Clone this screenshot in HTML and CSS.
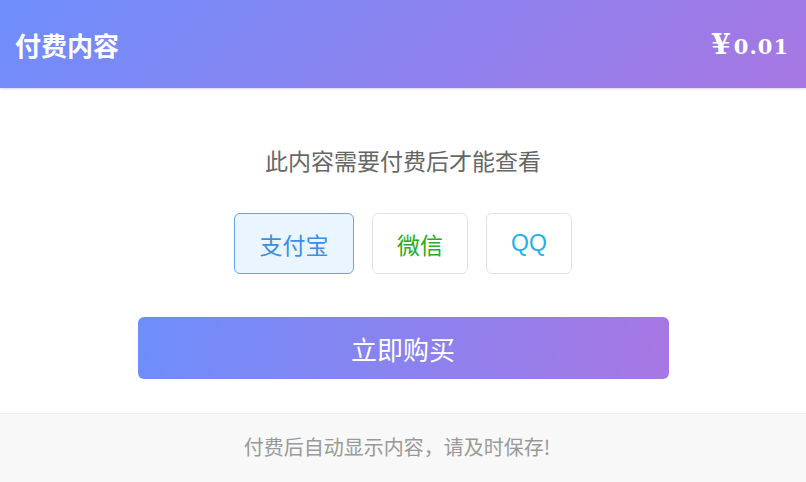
FILE: index.html
```html
<!DOCTYPE html>
<html lang="zh-CN">
<head>
<meta charset="utf-8">
<title>付费内容</title>
<link rel="stylesheet" href="styles.css">
</head>
<body>
<div class="card">
  <header class="head">
    <div class="title">付费内容</div>
    <div class="price"><span class="yen">¥</span><span class="num">0.01</span></div>
  </header>
  <main class="content">
    <p class="tip">此内容需要付费后才能查看</p>
    <div class="methods">
      <button class="method alipay">支付宝</button>
      <button class="method wechat">微信</button>
      <button class="method qq">QQ</button>
    </div>
    <button class="buy">立即购买</button>
  </main>
  <footer class="foot">付费后自动显示内容，请及时保存!</footer>
</div>
</body>
</html>
```
FILE: styles.css
```css
html, body {
  margin: 0;
  padding: 0;
  background: #fff;
}
body {
  font-family: "Liberation Sans", "Noto Sans CJK SC", sans-serif;
}
.card {
  width: 806px;
  display: flex;
  flex-direction: column;
}
.head {
  height: 88px;
  flex: none;
  box-sizing: border-box;
  padding: 0 17px 0 15px;
  display: flex;
  align-items: center;
  justify-content: space-between;
  background: linear-gradient(135deg, #6e8efb 0%, #a777e3 100%);
  color: #fff;
  box-shadow: 0 1px 2px rgba(167, 119, 227, 0.35);
}
.title {
  font-family: "Noto Sans CJK SC", sans-serif;
  font-weight: 700;
  font-size: 26px;
}
.price {
  font-family: "DejaVu Serif", "Liberation Serif", serif;
  font-weight: 700;
  display: flex;
  align-items: baseline;
}
.yen {
  font-size: 28px;
  margin-right: 3px;
}
.num {
  font-size: 21px;
  letter-spacing: 1px;
}
.content {
  display: flex;
  flex-direction: column;
  align-items: center;
  padding: 57px 0 34px;
}
.tip {
  margin: 0;
  font-family: "Noto Sans CJK SC", sans-serif;
  font-size: 23px;
  line-height: 30px;
  color: #666;
}
.methods {
  margin-top: 38px;
  display: flex;
  gap: 18px;
}
.method {
  height: 61px;
  padding: 0 24px;
  box-sizing: border-box;
  border: 1px solid #e2e2e2;
  border-radius: 6px;
  background: #fff;
  font-family: "Noto Sans CJK SC", sans-serif;
  font-size: 23px;
  cursor: pointer;
}
.alipay {
  padding: 0 24.5px;
  color: #3a8ee8;
  background: #eaf5ff;
  border-color: #5aa8f2;
}
.wechat {
  color: #22ad22;
}
.qq {
  color: #1fb1ee;
  font-family: "Liberation Sans", sans-serif;
}
.buy {
  margin-top: 43px;
  width: 531px;
  height: 62px;
  border: none;
  border-radius: 6px;
  background: linear-gradient(100deg, #6e8efb 0%, #a777e3 100%);
  color: #fff;
  font-family: "Noto Sans CJK SC", sans-serif;
  font-size: 26px;
  cursor: pointer;
}
.foot {
  height: 70px;
  box-sizing: border-box;
  border-top: 1px solid #eeeeee;
  background: #f8f8f8;
  color: #999;
  font-family: "Noto Sans CJK SC", sans-serif;
  font-size: 20px;
  display: flex;
  align-items: center;
  justify-content: center;
  padding: 0 12px 4px 0;
}
```
